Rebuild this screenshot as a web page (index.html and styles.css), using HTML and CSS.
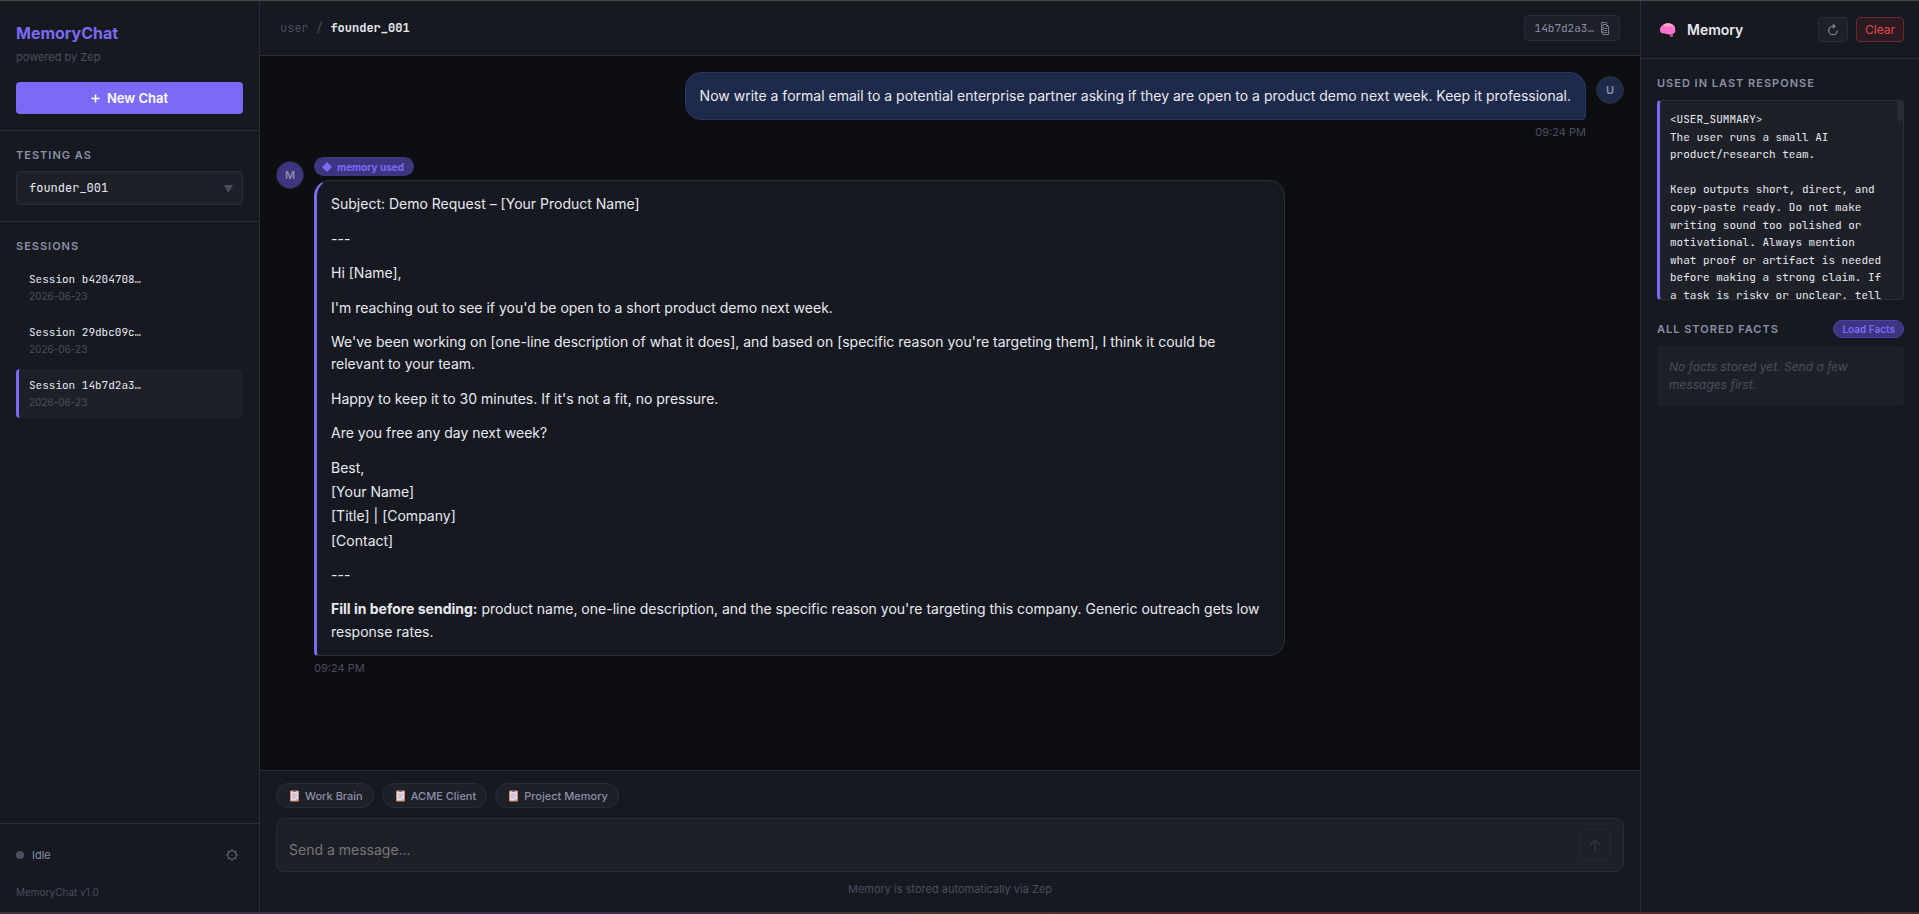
FILE: index.html
```html
<!DOCTYPE html>
<html lang="en">
<head>
<meta charset="utf-8">
<title>MemoryChat</title>
<link rel="stylesheet" href="styles.css">
</head>
<body>
<svg class="sprite" aria-hidden="true">
  <symbol id="clipboard" viewBox="0 0 10 12">
    <rect x="0" y="0.5" width="9" height="11" rx="0.8" fill="#d98a5b"/>
    <path d="M1 1.5h7v7.5l-2 1.5H1z" fill="#e4dcf0"/>
    <path d="M3 0.5h3v1.2H3z" fill="#5d5a70"/>
    <path d="M2 4h5M2 5.9h5M2 7.8h3.5" stroke="#a9a0b8" stroke-width="0.7"/>
    <path d="M6 10.5V9h2z" fill="#b9a9cc"/>
  </symbol>
</svg>
<div class="app">
  <aside class="sidebar">
    <header class="brand">
      <h1 class="brand-name">MemoryChat</h1>
      <p class="brand-sub">powered by Zep</p>
      <button class="new-chat" type="button">
        <svg width="9" height="9" viewBox="0 0 9 9" aria-hidden="true"><path d="M4.5 0.5v8M0.5 4.5h8" stroke="currentColor" stroke-width="1.6"/></svg>
        New Chat
      </button>
    </header>
    <section class="tester">
      <label class="label" for="tester">TESTING AS</label>
      <div class="select-wrap">
        <select class="select" id="tester"><option>founder_001</option></select>
        <svg class="select-arrow" width="9" height="8" viewBox="0 0 9 8" aria-hidden="true"><path d="M0 0h9L4.5 8z" fill="currentColor"/></svg>
      </div>
    </section>
    <nav class="sessions">
      <h2 class="label">SESSIONS</h2>
      <a class="session" href="#"><span class="session-name">Session b4204708…</span><span class="session-date">2026-06-23</span></a>
      <a class="session" href="#"><span class="session-name">Session 29dbc09c…</span><span class="session-date">2026-06-23</span></a>
      <a class="session session-active" href="#"><span class="session-name">Session 14b7d2a3…</span><span class="session-date">2026-06-23</span></a>
    </nav>
    <footer class="side-foot">
      <div class="status">
        <span class="dot"></span>
        <span class="status-text">Idle</span>
        <button class="gear" type="button" aria-label="Settings">
          <svg width="12" height="12" viewBox="0 0 12 12" fill="none" stroke="currentColor" aria-hidden="true"><circle cx="6" cy="6" r="4.2" stroke-width="1.2"/><path d="M6 0v1.800M6 10.200V12M0 6h1.800M10.200 6H12M1.600 1.600l1.400 1.400M9 9l1.400 1.400M10.400 1.600L9 3M3 9l-1.400 1.400"/><circle cx="6" cy="6" r="0.7" fill="currentColor" stroke="none"/></svg>
        </button>
      </div>
      <p class="version">MemoryChat v1.0</p>
    </footer>
  </aside>

  <main class="chat">
    <header class="topbar">
      <p class="crumb">user / <strong class="crumb-id">founder_001</strong></p>
      <button class="session-chip" type="button">14b7d2a3…
        <svg width="8" height="13" viewBox="0 0 8 13" fill="none" stroke="currentColor" stroke-width="0.8" aria-hidden="true"><path d="M0.500 10.500V0.500h4.500l1.500 1.500M2 12.500V2.500h3.500l2 2v8zM5.500 2.500v2h2M3.200 6.500h3M3.200 8.500h3M3.200 10.500h3M0.500 10.500H2"/></svg>
      </button>
    </header>
    <div class="thread">
      <article class="msg msg-user">
        <div class="avatar avatar-user">U</div>
        <div class="msg-body">
          <div class="bubble bubble-user"><p>Now write a formal email to a potential enterprise partner asking if they are open to a product demo next week. Keep it professional.</p></div>
          <time class="time">09:24 PM</time>
        </div>
      </article>
      <article class="msg">
        <div class="avatar avatar-bot">M</div>
        <div class="msg-body">
          <span class="badge"><svg width="10" height="10" viewBox="0 0 10 10" aria-hidden="true"><path d="M5 0l5 5-5 5-5-5z" fill="currentColor"/></svg>memory used</span>
          <div class="bubble bubble-bot">
            <p>Subject: Demo Request – [Your Product Name]</p>
            <p>---</p>
            <p>Hi [Name],</p>
            <p>I'm reaching out to see if you'd be open to a short product demo next week.</p>
            <p>We've been working on [one-line description of what it does], and based on [specific reason you're targeting them], I think it could be relevant to your team.</p>
            <p>Happy to keep it to 30 minutes. If it's not a fit, no pressure.</p>
            <p>Are you free any day next week?</p>
            <p class="signature"><span>Best,</span><span>[Your Name]</span><span>[Title] | [Company]</span><span>[Contact]</span></p>
            <p>---</p>
            <p><strong>Fill in before sending:</strong> product name, one-line description, and the specific reason you're targeting this company. Generic outreach gets low response rates.</p>
          </div>
          <time class="time">09:24 PM</time>
        </div>
      </article>
    </div>
    <footer class="composer">
      <div class="presets">
        <button class="preset" type="button"><svg width="10" height="12" aria-hidden="true"><use href="#clipboard"/></svg>Work Brain</button>
        <button class="preset" type="button"><svg width="10" height="12" aria-hidden="true"><use href="#clipboard"/></svg>ACME Client</button>
        <button class="preset" type="button"><svg width="10" height="12" aria-hidden="true"><use href="#clipboard"/></svg>Project Memory</button>
      </div>
      <form class="entry">
        <textarea class="entry-text" rows="1" placeholder="Send a message..." aria-label="Message"></textarea>
        <button class="send" type="button" aria-label="Send" disabled>
          <svg width="12" height="12" viewBox="0 0 12 12" fill="none" stroke="currentColor" stroke-width="1.8" aria-hidden="true"><path d="M6 12V1M1 6l5-5 5 5"/></svg>
        </button>
      </form>
      <p class="hint">Memory is stored automatically via Zep</p>
    </footer>
  </main>

  <aside class="memory">
    <header class="memory-head">
      <svg width="20" height="16" viewBox="0 0 20 16" aria-hidden="true">
        <path d="M3 8.500C2.600 5.500 4.500 3.800 6 3 8 1.300 12 .8 14.500 2c2.500 1 4 3.500 3.800 6 .3 2-1 3.600-2.800 3.800l.2 2.900-1.900.3-1.600-2.800c-2.200.2-3.700-.6-5.200-1C5 11.800 3.300 10.500 3 8.500z" fill="#fb78cf"/>
        <path d="M6 3C8 1.300 12 .8 14.500 2c1.800.8 2.800 2 3.300 3.500-2-.6-3-2-5-1.200-2.400 1-4.500-.6-6.800-1.300z" fill="#ffaac4"/>
        <path d="M4.500 7c2-1.500 3 .5 5-.5s3 .8 4.500 0M6 9.700c2-.8 3.500.8 5.500-.5 2-1 3 .5 4.500 0" stroke="#ea5fbd" fill="none" stroke-width="0.6"/>
        <path d="M13 12.200l2.500-.4.200 2.900-1.900.3z" fill="#c2458f"/>
      </svg>
      <h2 class="memory-title">Memory</h2>
      <button class="tool" type="button" aria-label="Refresh">
        <svg width="12" height="12" viewBox="0 0 12 12" fill="none" stroke="currentColor" stroke-width="1.1" aria-hidden="true"><path d="M7.500 2.200H5.700A4.300 4.300 0 1 0 10.300 6.500M5.800 0.300l2.300 1.900-2.300 2"/></svg>
      </button>
      <button class="tool tool-danger" type="button">Clear</button>
    </header>
    <div class="memory-body">
      <h3 class="label">USED IN LAST RESPONSE</h3>
      <div class="context">
        <div class="context-text">&lt;USER_SUMMARY&gt;
The user runs a small AI product/research team.

Keep outputs short, direct, and copy-paste ready. Do not make writing sound too polished or motivational. Always mention what proof or artifact is needed before making a strong claim. If a task is risky or unclear, tell</div>
        <span class="thumb"></span>
      </div>
      <div class="facts-head">
        <h3 class="label">ALL STORED FACTS</h3>
        <button class="load" type="button">Load Facts</button>
      </div>
      <p class="facts-empty">No facts stored yet. Send a few messages first.</p>
    </div>
  </aside>
</div>
</body>
</html>
```
FILE: styles.css
```css
:root {
  --bg: #0d0e12;
  --panel: #161920;
  --raised: #1e2028;
  --line: #2a2d38;
  --accent: #7c6af7;
  --accent-dim: #3d3580;
  --text: #e8e9f0;
  --muted: #8b8fa8;
  --faint: #4a4d5e;
  --sans: Inter, "Liberation Sans", sans-serif;
  --mono: "JetBrains Mono", "DejaVu Sans Mono", monospace;
}
* { box-sizing: border-box; margin: 0; }
body {
  display: flex;
  flex-direction: column;
  height: 100vh;
  background: var(--bg);
  color: var(--text);
  font: 14px/22px var(--sans);
}
body::after {
  content: "";
  height: 2px;
  background: linear-gradient(90deg, #39343f, #3a2d50 30%, #443a30 48%, #5a2528 65%, #4a302c);
}
button, select, textarea { font: inherit; color: inherit; }
a { color: inherit; text-decoration: none; }
.sprite { display: none; }

.app {
  display: grid;
  flex: 1;
  grid-template-columns: 260px 1fr 279px;
  min-height: 0;
  border-top: 1px solid #444845;
}
.label {
  display: block;
  font-size: 11px;
  line-height: 18px;
  font-weight: 600;
  letter-spacing: 1px;
  color: var(--muted);
}

/* sidebar */
.sidebar {
  display: flex;
  flex-direction: column;
  background: var(--panel);
  border-right: 1px solid var(--line);
}
.brand { padding: 20px 16px 16px; border-bottom: 1px solid var(--line); }
.brand-name { font-size: 16px; line-height: 24px; font-weight: 700; color: var(--accent); }
.brand-sub { margin: 3px 0 16px; font-size: 11px; line-height: 18px; color: var(--faint); }
.new-chat {
  display: flex;
  align-items: center;
  justify-content: center;
  gap: 7px;
  width: 100%;
  height: 32px;
  border: 0;
  border-radius: 4px;
  background: var(--accent);
  color: #fff;
  font-size: 13px;
  font-weight: 600;
}
.tester { padding: 15px 16px 16px; border-bottom: 1px solid var(--line); }
.tester .label { margin-bottom: 7px; }
.select-wrap { position: relative; }
.select {
  display: block;
  width: 100%;
  height: 34px;
  padding: 0 12px;
  appearance: none;
  border: 1px solid var(--line);
  border-radius: 4px;
  background: var(--raised);
  font-family: var(--mono);
  font-size: 12px;
}
.select-arrow { position: absolute; right: 10px; top: 14px; color: var(--faint); }
.sessions { display: flex; flex-direction: column; gap: 4px; flex: 1; padding: 15px 16px; }
.sessions .label { margin-bottom: 4px; }
.session {
  display: flex;
  flex-direction: column;
  padding: 8px 10px;
  border-left: 3px solid transparent;
  border-radius: 4px;
}
.session-active { background: var(--raised); border-left-color: var(--accent); }
.session-name { font: 11px/17px var(--mono); }
.session-date { font-size: 10px; line-height: 16px; color: var(--faint); }
.side-foot { padding: 22px 16px 11px; border-top: 1px solid var(--line); }
.status { display: flex; align-items: center; gap: 8px; margin-bottom: 19px; }
.dot { width: 8px; height: 8px; border-radius: 50%; background: var(--faint); }
.status-text { flex: 1; font-size: 11px; line-height: 18px; color: var(--muted); }
.gear { display: flex; padding: 0 5px; border: 0; background: none; color: #5d6074; }
.version { font-size: 10px; line-height: 18px; color: var(--faint); }

/* conversation */
.chat { display: flex; flex-direction: column; min-width: 0; }
.topbar {
  display: flex;
  align-items: center;
  justify-content: space-between;
  height: 55px;
  padding: 0 20px;
  background: var(--panel);
  border-bottom: 1px solid var(--line);
}
.crumb { font: 12px/20px var(--mono); color: var(--faint); }
.crumb-id { color: var(--text); }
.session-chip {
  display: flex;
  align-items: center;
  gap: 7px;
  height: 26px;
  padding: 0 10px;
  border: 1px solid var(--line);
  border-radius: 4px;
  background: var(--raised);
  font: 11px/18px var(--mono);
  color: var(--muted);
}
.thread { display: flex; flex-direction: column; gap: 16px; flex: 1; padding: 16px; overflow: hidden; }
.msg { display: flex; align-items: flex-start; gap: 10px; }
.msg-user { flex-direction: row-reverse; }
.msg-body { display: flex; flex-direction: column; align-items: flex-start; gap: 4px; max-width: 72%; }
.msg-user .msg-body { align-items: flex-end; }
.avatar {
  display: grid;
  place-items: center;
  width: 28px;
  height: 28px;
  margin-top: 4px;
  border: 1px solid var(--line);
  border-radius: 50%;
  font-size: 11px;
  font-weight: 600;
  color: var(--muted);
}
.avatar-user { background: #1e2a4a; }
.avatar-bot { background: var(--accent-dim); }
.bubble {
  display: flex;
  flex-direction: column;
  gap: 12px;
  padding: 12px 14px;
  border: 1px solid var(--line);
  border-radius: 16px;
  line-height: 1.6;
}
.bubble-user { background: #1e2a4a; border-color: #2d3568; border-bottom-right-radius: 4px; }
.bubble-bot { background: var(--panel); border-left: 3px solid var(--accent); border-bottom-left-radius: 4px; }
.signature { display: flex; flex-direction: column; gap: 2px; }
.time { font-size: 11px; line-height: 17px; color: var(--faint); }
.badge {
  display: flex;
  align-items: center;
  gap: 5px;
  height: 19px;
  padding: 0 10px 0 8px;
  border-radius: 10px;
  background: var(--accent-dim);
  color: var(--accent);
  font-size: 10px;
  font-weight: 700;
}

/* composer */
.composer { padding: 12px 16px 14px; background: var(--panel); border-top: 1px solid var(--line); }
.presets { display: flex; gap: 8px; margin-bottom: 10px; }
.preset {
  display: flex;
  align-items: center;
  gap: 5px;
  height: 25px;
  padding: 0 10px 0 13px;
  border: 1px solid var(--line);
  border-radius: 13px;
  background: var(--raised);
  color: var(--muted);
  font-size: 11px;
  font-weight: 500;
}
.entry {
  display: flex;
  align-items: center;
  padding: 10px 12px;
  border: 1px solid var(--line);
  border-radius: 8px;
  background: var(--raised);
}
.entry-text {
  flex: 1;
  height: 32px;
  padding: 10px 0 0;
  border: 0;
  outline: 0;
  resize: none;
  overflow: hidden;
  background: none;
  line-height: 22px;
}
.send {
  display: grid;
  place-items: center;
  width: 32px;
  height: 32px;
  border: 1px solid #252731;
  border-radius: 4px;
  background: none;
  color: #2d2f3c;
}
.hint { margin-top: 8px; font-size: 11px; line-height: 18px; text-align: center; color: var(--faint); }

/* memory panel */
.memory { background: var(--panel); border-left: 1px solid var(--line); }
.memory-head {
  display: flex;
  align-items: center;
  gap: 10px;
  height: 58px;
  padding: 0 15px 0 16px;
  border-bottom: 1px solid var(--line);
}
.memory-title { flex: 1; font-size: 14px; line-height: 22px; font-weight: 600; }
.tool {
  display: grid;
  place-items: center;
  height: 25px;
  padding: 0 8px;
  border: 1px solid var(--line);
  border-radius: 4px;
  background: var(--raised);
  color: var(--muted);
  font-size: 12px;
}
.tool-danger { margin-left: -2px; background: #2d1b22; border-color: #6b2a30; color: #e04848; }
.memory-body { padding: 15px 15px 0 16px; }
.context {
  position: relative;
  height: 200px;
  margin-top: 8px;
  padding: 10px 16px 10px 10px;
  border: 1px solid var(--line);
  border-left: 3px solid var(--accent);
  border-radius: 4px;
  background: var(--raised);
  overflow: hidden;
}
.context-text { font: 11px/1.6 var(--mono); white-space: pre-line; }
.thumb { position: absolute; top: 0; right: 0; width: 6px; height: 20px; border-radius: 3px; background: var(--line); }
.facts-head { display: flex; align-items: center; justify-content: space-between; margin: 20px 0 8px; }
.load {
  height: 18px;
  padding: 0 8px;
  border: 1px solid #4d42a8;
  border-radius: 9px;
  background: var(--accent-dim);
  color: var(--accent);
  font-size: 10px;
  line-height: 16px;
  font-weight: 600;
}
.facts-empty {
  padding: 12px;
  border-radius: 4px;
  background: var(--raised);
  color: var(--faint);
  font-size: 12px;
  line-height: 18px;
  font-style: italic;
}
```
